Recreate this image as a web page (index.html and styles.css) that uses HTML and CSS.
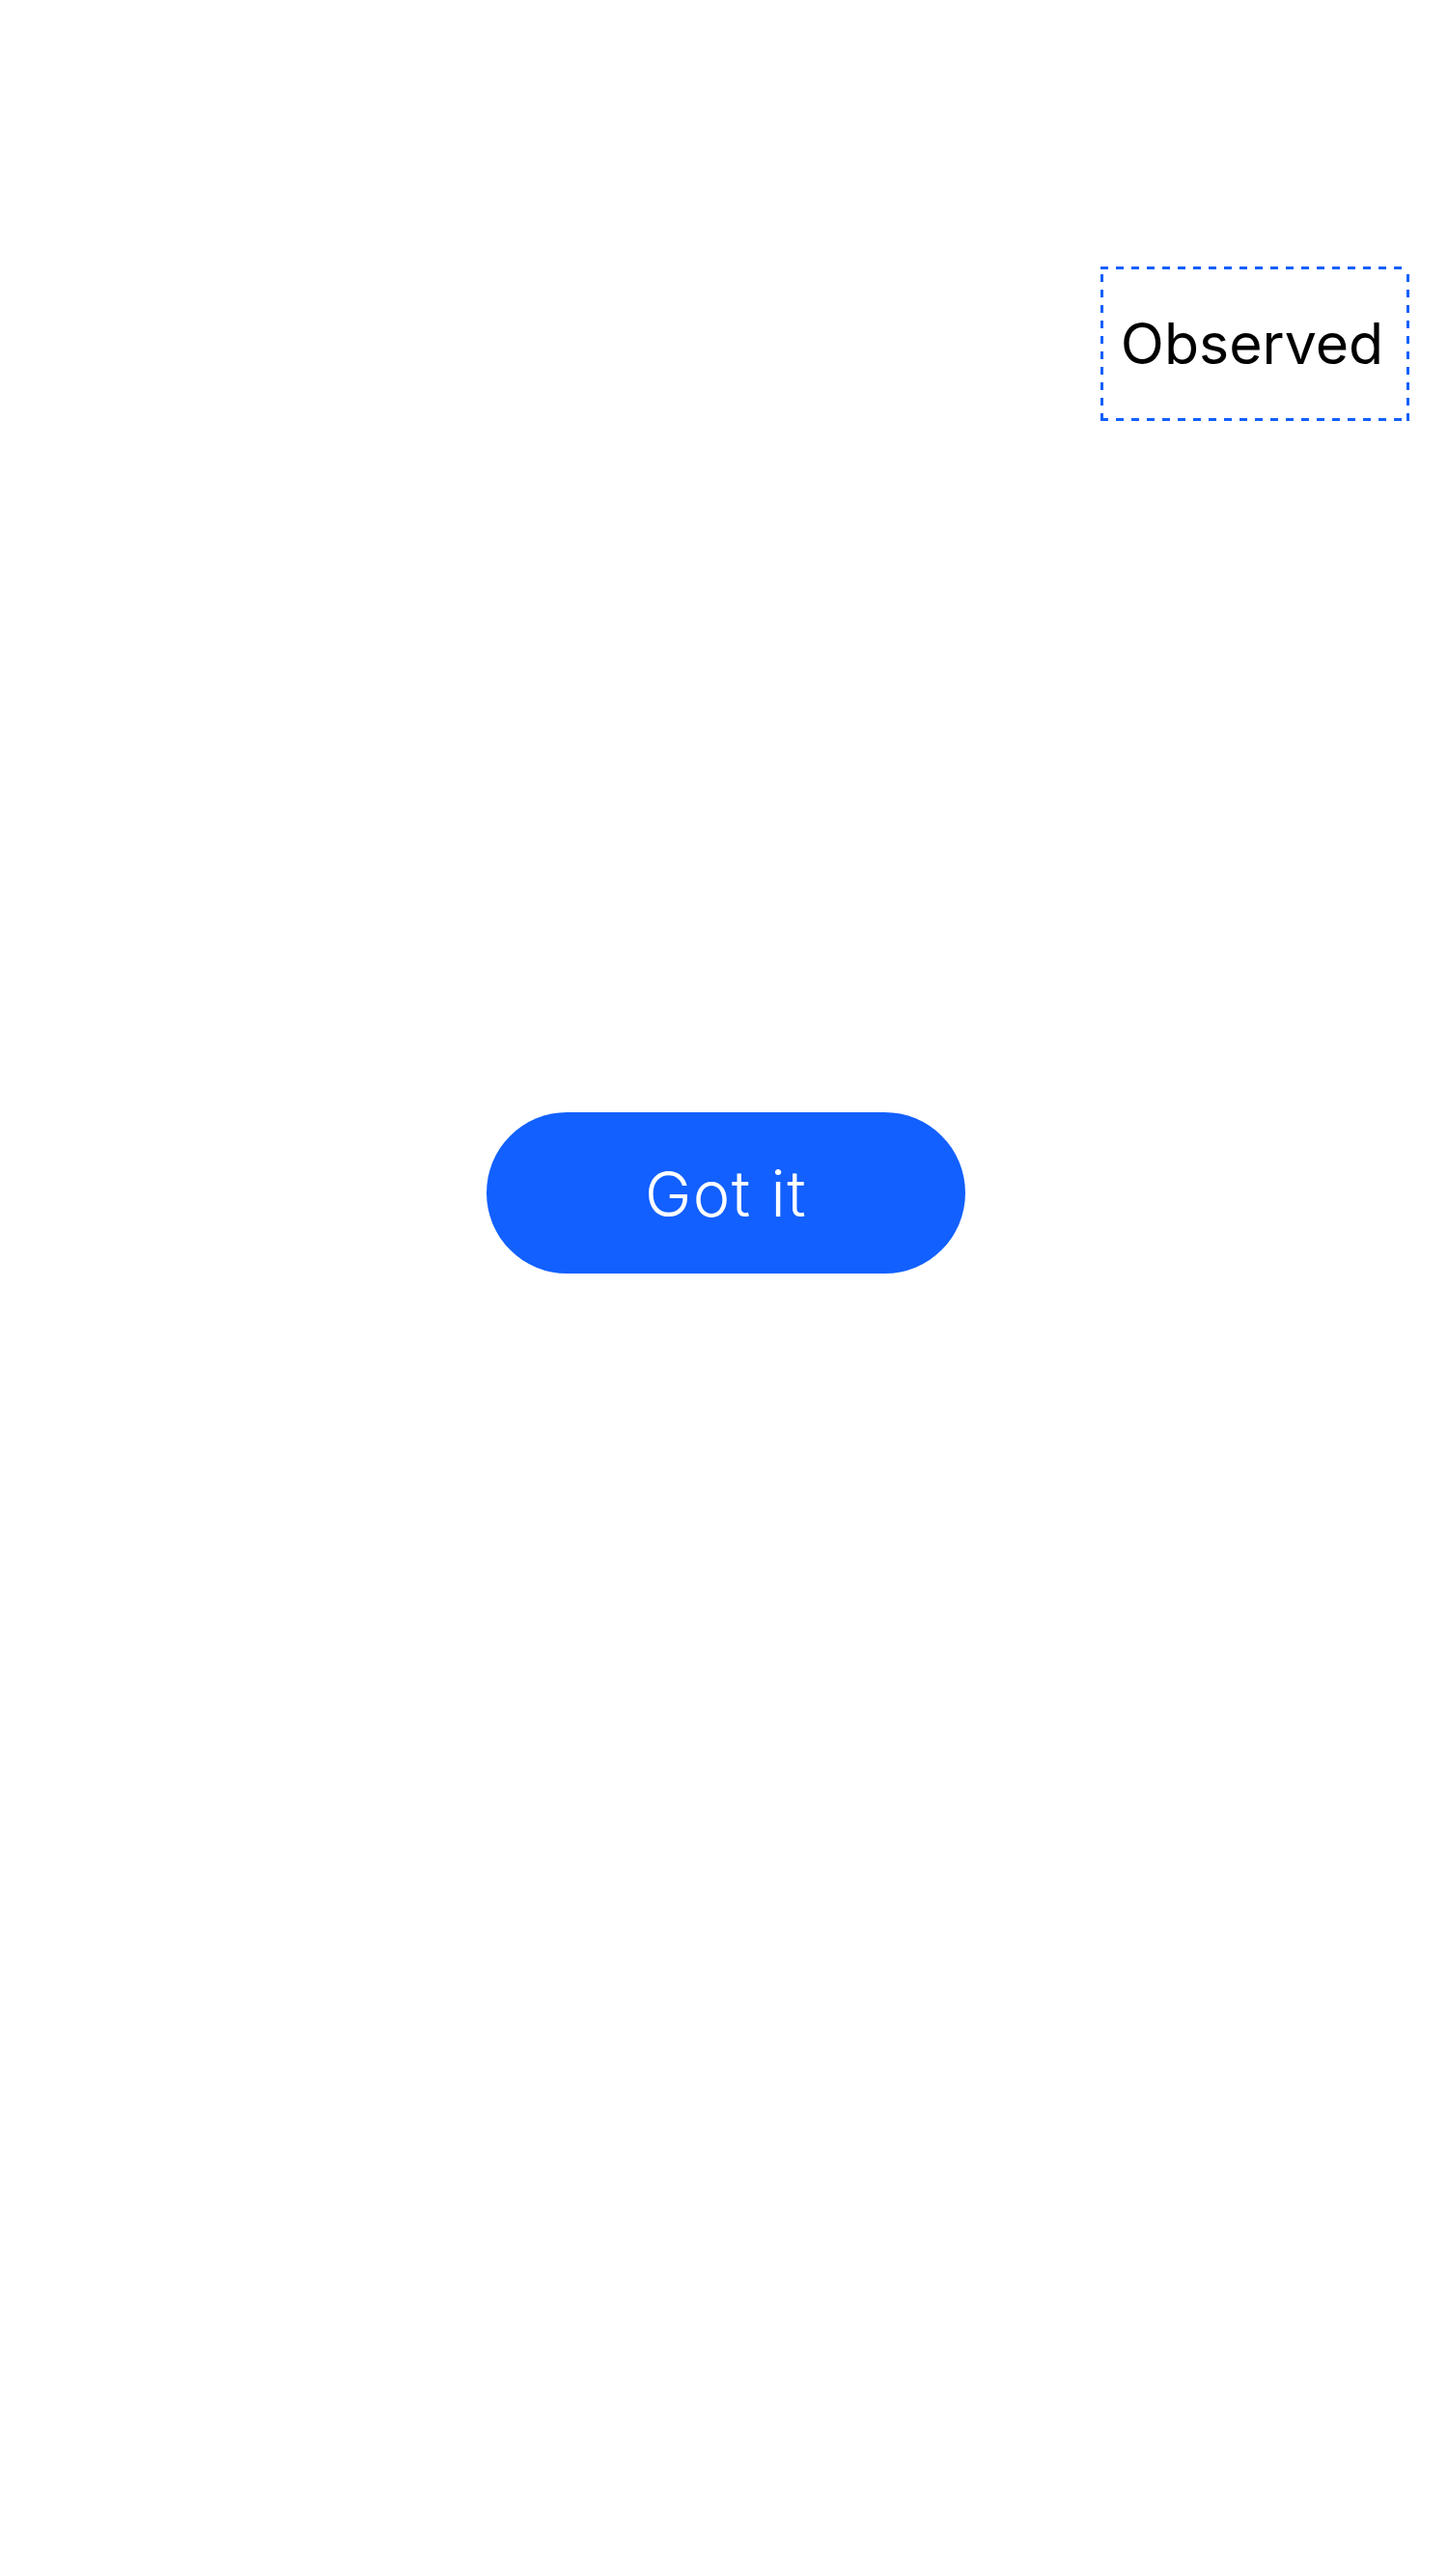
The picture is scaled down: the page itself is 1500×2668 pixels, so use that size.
FILE: index.html
```html
<!DOCTYPE html>
<html lang="en">
<head>
<meta charset="utf-8">
<title>Observed</title>
<link rel="stylesheet" href="styles.css">
</head>
<body>
<main class="page">
  <header class="top">
    <div class="observed">Observed</div>
  </header>
  <section class="actions">
    <button class="got-it" type="button">Got it</button>
  </section>
</main>
</body>
</html>
```
FILE: styles.css
```css
html, body {
  margin: 0;
  padding: 0;
  background: #ffffff;
}
.page {
  width: 1500px;
  min-height: 2668px;
  font-family: Inter, "Noto Sans", sans-serif;
}
.top {
  display: flex;
  justify-content: flex-end;
  padding: 276px 40px 0 0;
}
.observed {
  box-sizing: border-box;
  width: 320px;
  height: 160px;
  background:
    repeating-linear-gradient(90deg, #1260ff 0 8px, transparent 8px 16px) left top / 100% 3px no-repeat,
    repeating-linear-gradient(90deg, #1260ff 0 8px, transparent 8px 16px) left bottom / 100% 3px no-repeat,
    repeating-linear-gradient(180deg, transparent 0 8px, #1260ff 8px 16px) left top / 3px 100% no-repeat,
    repeating-linear-gradient(180deg, transparent 0 8px, #1260ff 8px 16px) right top / 3px 100% no-repeat;
  display: flex;
  align-items: center;
  justify-content: center;
  font-size: 59px;
  font-weight: 400;
  color: #000;
  padding: 0 6px 2px 0;
}
.actions {
  display: flex;
  justify-content: center;
  padding-top: 716px;
  padding-left: 4px;
}
.got-it {
  box-sizing: border-box;
  width: 496px;
  height: 167px;
  border: none;
  border-radius: 84px;
  background: #1260ff;
  color: #fff;
  font-family: Inter, "Noto Sans", sans-serif;
  font-size: 65px;
  font-weight: 300;
  letter-spacing: 1.5px;
  padding: 2px 0 0 0;
  display: flex;
  align-items: center;
  justify-content: center;
}
```
